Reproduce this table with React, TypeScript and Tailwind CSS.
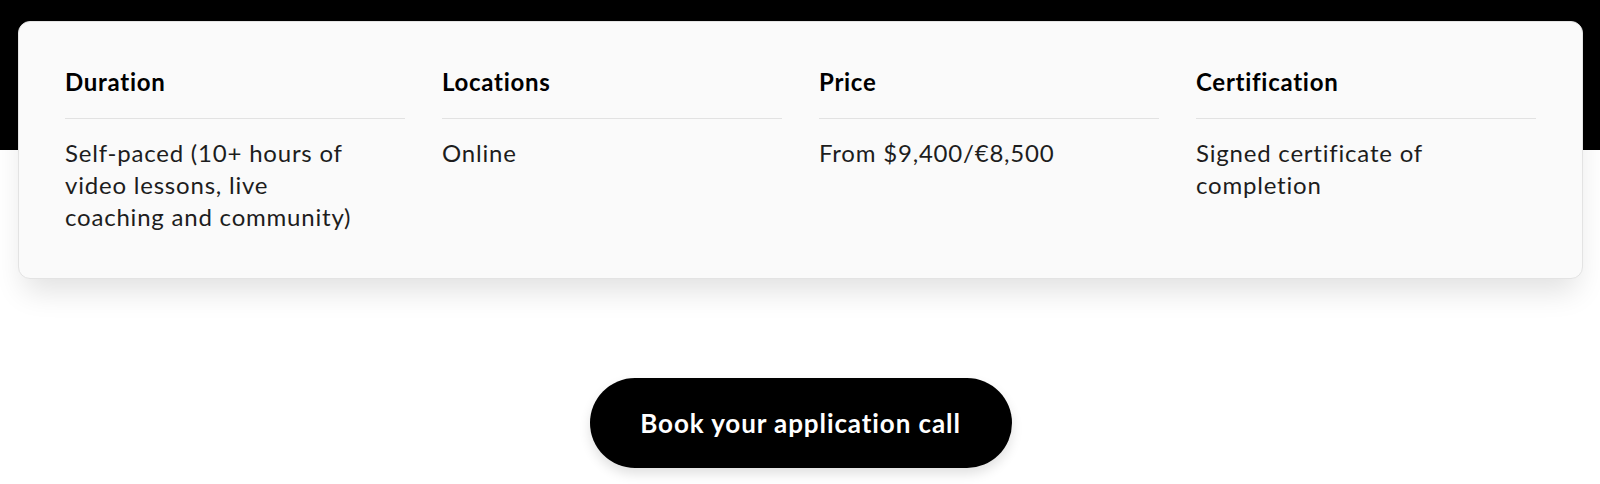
import React from "react";

const DETAILS = [
  { label: "Duration", value: "Self-paced (10+ hours of video lessons, live coaching and community)" },
  { label: "Locations", value: "Online" },
  { label: "Price", value: "From $9,400/€8,500" },
  { label: "Certification", value: "Signed certificate of completion" },
];

export default function App() {
  return (
    <div className="min-h-[484px] bg-[linear-gradient(to_bottom,#000_150px,#fff_150px)] pt-[21px] pl-[18px] pr-[17px] font-['Lato',sans-serif]">
      {/* Course details card */}
      <div className="rounded-xl border border-[#e3e3e3] bg-[#fafafa] px-[46px] pt-[44px] pb-[45px] shadow-[0_18px_30px_-6px_rgba(0,0,0,0.12)]">
        <div className="grid grid-cols-4 gap-x-[37px]">
          {DETAILS.map((d) => (
            <div key={d.label}>
              <p className="border-b border-[#e2e2e2] pb-[20px] text-[24px] font-bold leading-[32px] tracking-[0.03em] text-black">{d.label}</p>
              <p className="mt-[18px] max-w-[300px] text-[24px] leading-[32px] tracking-[0.033em] text-[#1d1d1d]">{d.value}</p>
            </div>
          ))}
        </div>
      </div>

      <div className="mt-[99px] flex justify-center">
        <button className="h-[90px] w-[422px] rounded-full bg-black text-[26px] font-bold tracking-[0.035em] text-white shadow-[0_6px_12px_rgba(0,0,0,0.12)]">
          Book your application call
        </button>
      </div>
    </div>
  );
}
